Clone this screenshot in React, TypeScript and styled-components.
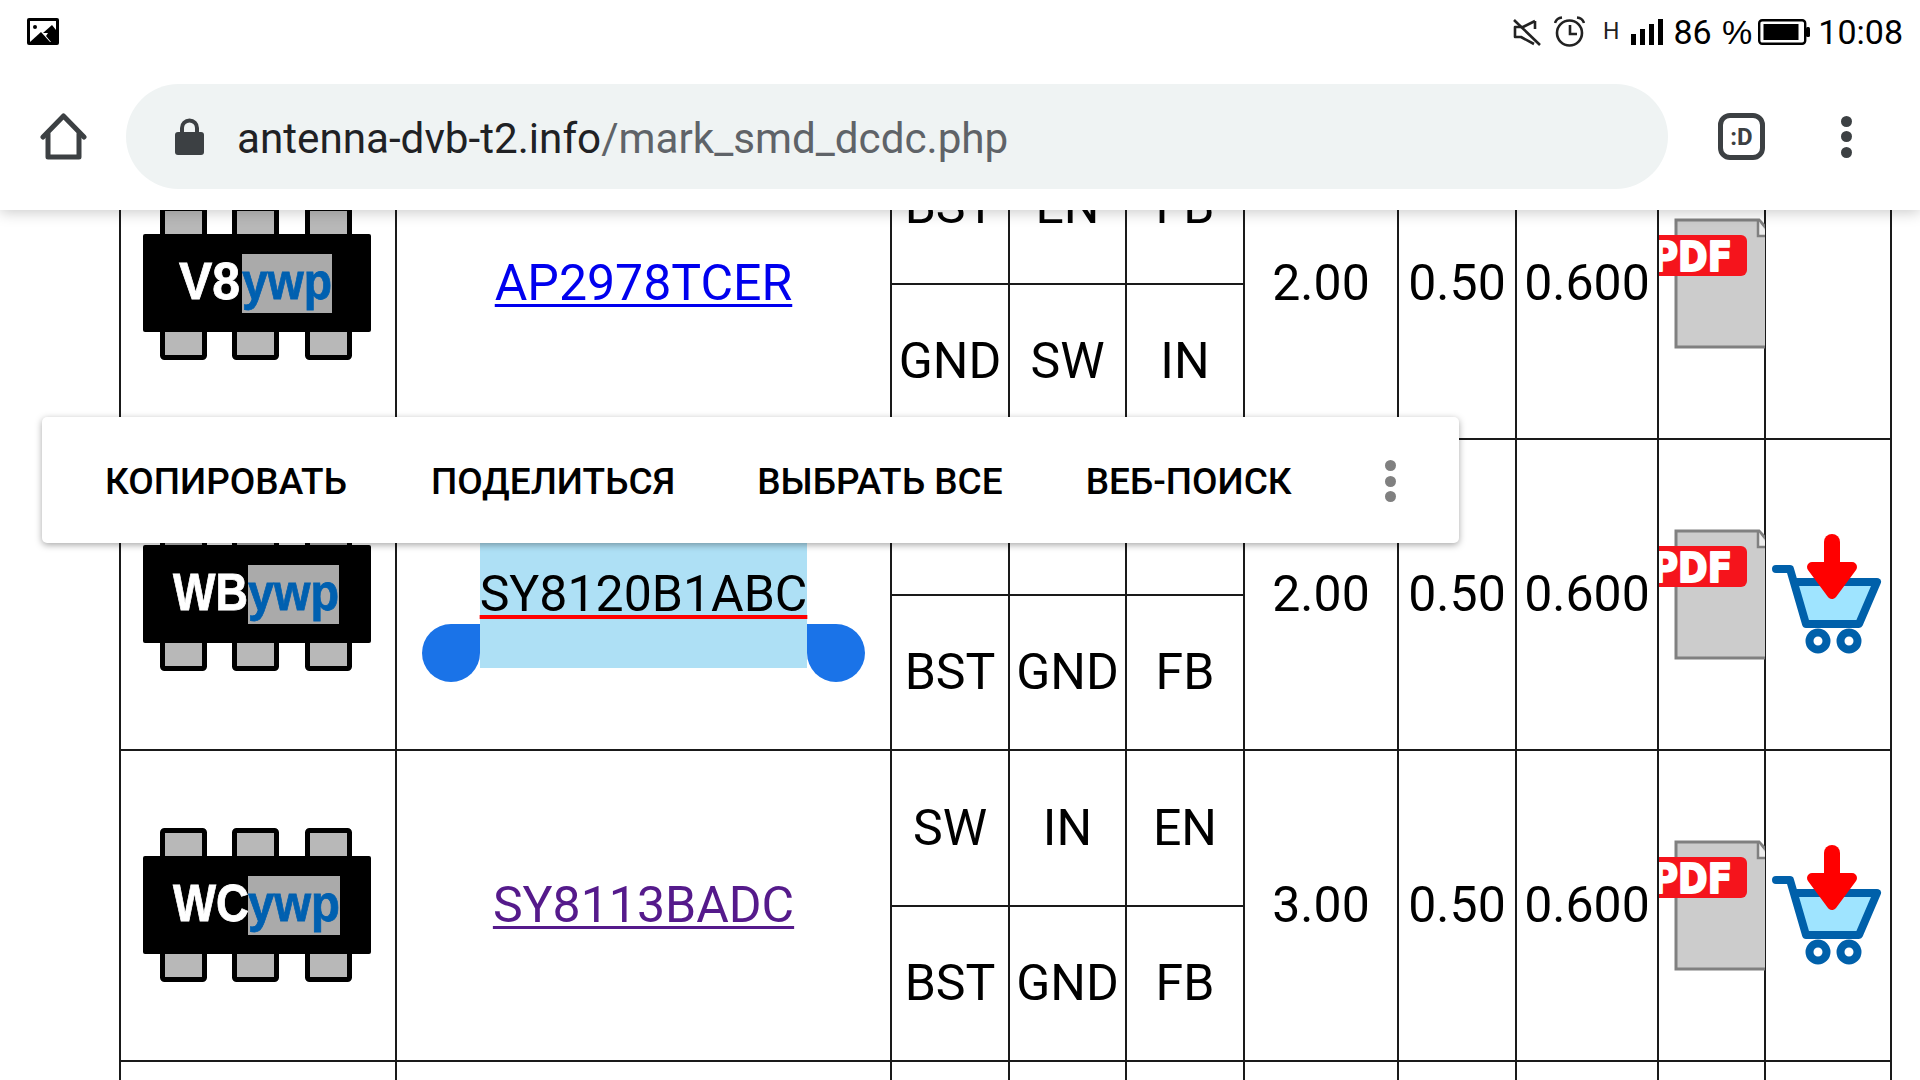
import React from 'react';
import styled, { createGlobalStyle } from 'styled-components';

const Global = createGlobalStyle`
  html, body { margin: 0; padding: 0; background: #fff; }
  body { font-family: Roboto, "Liberation Sans", sans-serif; color: #000; overflow: hidden; }
`;

const Page = styled.div`
  position: relative;
  width: 1920px;
  height: 1080px;
  overflow: hidden;
  background: #fff;
`;

const Header = styled.header`
  position: relative;
  z-index: 3;
  background: #fff;
  box-shadow: 0 2px 14px rgba(0, 0, 0, 0.22);
`;

const StatusBar = styled.div`
  display: flex;
  align-items: center;
  height: 63px;
  padding: 0 17px 0 27px;
`;

const StatusSpacer = styled.div`
  flex: 1;
`;

const StatusItem = styled.div<{ $gap: number }>`
  display: flex;
  align-items: center;
  margin-left: ${p => p.$gap}px;
`;

const StatusText = styled.span`
  font-size: 34px;
  line-height: 40px;
  word-spacing: 2px;
  color: #000;
  white-space: pre;
`;

const PercentSign = styled.span`
  font-family: "Liberation Sans", sans-serif;
`;

const NetLetter = styled.span`
  font-size: 23px;
  line-height: 24px;
  color: #222;
`;

const Toolbar = styled.div`
  display: flex;
  align-items: center;
  height: 147px;
  padding-left: 40px;
`;

const UrlPill = styled.div`
  display: flex;
  align-items: center;
  width: 1542px;
  height: 105px;
  margin-left: 39px;
  padding-left: 49px;
  box-sizing: border-box;
  border-radius: 53px;
  background: #eff3f3;
`;

const Url = styled.span`
  margin: 4px 0 0 33px;
  font-size: 42.2px;
  line-height: 48px;
  color: #202124;
  white-space: nowrap;
`;

const UrlPath = styled.span`
  color: #5f6368;
`;

const TabCounter = styled.div`
  display: flex;
  align-items: center;
  justify-content: center;
  width: 47px;
  height: 47px;
  margin-left: 50px;
  box-sizing: border-box;
  border: 5px solid #3c4043;
  border-radius: 12px;
  font-size: 24px;
  font-weight: 700;
  color: #3c4043;
`;

const MenuDots = styled.div<{ $gap: number; $color: string }>`
  display: flex;
  flex-direction: column;
  gap: 4.5px;
  margin-left: ${p => p.$gap}px;
  & > i {
    display: block;
    width: 11px;
    height: 11px;
    border-radius: 50%;
    background: ${p => p.$color};
  }
`;

const Table = styled.table`
  position: relative;
  margin: -83px 0 0 119px;
  border-collapse: collapse;
  table-layout: fixed;
  width: 1771px;
  font-size: 50px;
  text-align: center;
  & td {
    border: 2px solid #1a1a1a;
    padding: 0 0 1px;
    vertical-align: middle;
  }
`;

const UpperRow = styled.tr`
  height: 156px;
`;

const LowerRow = styled.tr`
  height: 155px;
`;

const ChipSvg = styled.svg`
  display: block;
  margin: 0 auto;
`;

const PartLink = styled.a<{ $visited?: boolean }>`
  color: ${p => (p.$visited ? '#551a8b' : '#0000ee')};
  text-decoration: underline;
  text-decoration-thickness: 3px;
  text-underline-offset: 4px;
`;

const SelectedLink = styled.a`
  position: relative;
  display: inline-block;
  isolation: isolate;
  color: #000;
  text-decoration: underline;
  text-decoration-color: #f00;
  text-decoration-thickness: 4px;
  text-underline-offset: 4px;
`;

const Selection = styled.span`
  position: absolute;
  z-index: -1;
  left: 0;
  right: 0;
  top: -130px;
  bottom: -45px;
  background: #aee0f5;
`;

const Handle = styled.span<{ $side: 'left' | 'right' }>`
  position: absolute;
  bottom: -59px;
  width: 58px;
  height: 58px;
  background: #1a73e8;
  ${p =>
    p.$side === 'left'
      ? 'left: -58px; border-radius: 50% 0 50% 50%;'
      : 'right: -58px; border-radius: 0 50% 50% 50%;'}
`;

const IconSvg = styled.svg`
  display: block;
  margin: 0 auto;
`;

const FloatingMenu = styled.div`
  position: absolute;
  z-index: 2;
  left: 42px;
  top: 417px;
  display: flex;
  align-items: center;
  width: 1417px;
  height: 126px;
  box-sizing: border-box;
  padding: 2px 0 0 63px;
  border-radius: 5px;
  background: #fff;
  box-shadow: 0 2px 7px rgba(0, 0, 0, 0.35);
`;

const MenuAction = styled.span<{ $gap?: number }>`
  margin-left: ${p => p.$gap ?? 0}px;
  font-size: 37px;
  font-weight: 500;
  color: #000;
  white-space: nowrap;
`;

const ImageIcon = () => (
  <svg width="32" height="27" viewBox="0 0 32 27">
    <rect width="32" height="27" rx="2" fill="#000" />
    <rect x="3" y="3" width="26" height="21" fill="#fff" />
    <path d="M3 24 L14 14 L23 24 Z" fill="#000" />
    <path d="M16 15 L25 7 L29 12 V24 H24 L19 18 L21 15 Z" fill="#000" />
    <circle cx="8" cy="9" r="2" fill="#000" />
  </svg>
);

const MuteIcon = () => (
  <svg width="28" height="28" viewBox="0 0 28 28" fill="none" stroke="#222" strokeWidth="2.6">
    <path d="M22 3 L10 9 H2 V19 H8 L21 26" strokeLinejoin="round" />
    <path d="M22 3 V11" />
    <path d="M1 2 L27 27" />
  </svg>
);

const AlarmIcon = () => (
  <svg width="31" height="31" viewBox="0 0 31 31" fill="none" stroke="#222" strokeWidth="2.6">
    <circle cx="15.5" cy="17" r="12.5" />
    <path d="M16 9 V18 H23" />
    <path d="M1 7 Q2.5 2 8 1.5" />
    <path d="M30 7 Q28.5 2 23 1.5" />
  </svg>
);

const SignalIcon = () => (
  <svg width="32" height="26" viewBox="0 0 32 26" fill="#000">
    <rect x="0" y="15" width="5" height="11" />
    <rect x="9" y="10" width="5" height="16" />
    <rect x="18" y="5" width="5" height="21" />
    <rect x="27" y="0" width="5" height="26" />
  </svg>
);

const BatteryIcon = () => (
  <svg width="52" height="26" viewBox="0 0 52 26">
    <rect x="1.2" y="1.2" width="46" height="23.6" rx="3" fill="#fff" stroke="#000" strokeWidth="2.4" />
    <rect x="5.5" y="5" width="35" height="16" fill="#000" />
    <rect x="48" y="8" width="4" height="10" rx="1.5" fill="#000" />
  </svg>
);

const HomeIcon = () => (
  <svg width="47" height="47" viewBox="0 0 47 47" fill="none" stroke="#3c4043" strokeWidth="5" strokeLinejoin="round" strokeLinecap="round">
    <path d="M3 24 L23.5 3 L44 24" />
    <path d="M8 21 V44 H39 V21" />
  </svg>
);

const LockIcon = () => (
  <svg width="29" height="37" viewBox="0 0 29 37">
    <path d="M7 17 V10 a7.5 7.5 0 0 1 15 0 V17" fill="none" stroke="#3c4043" strokeWidth="4" />
    <rect x="0" y="14" width="29" height="23" rx="3" fill="#3c4043" />
  </svg>
);

const Chip = ({ mark, markWidth, boxX, boxWidth, markX }: { mark: string; markWidth: number; markX: number; boxX: number; boxWidth: number }) => (
  <ChipSvg width="232" height="156" viewBox="0 0 232 156">
    {[18, 90, 163].map(x => (
      <React.Fragment key={x}>
        <rect x={x + 2.5} y={3.5} width={42} height={40} rx="2" fill="#b8b8b8" stroke="#000" strokeWidth="5" />
        <rect x={x + 2.5} y={112} width={42} height={40.5} rx="2" fill="#b8b8b8" stroke="#000" strokeWidth="5" />
      </React.Fragment>
    ))}
    <rect x="1" y="29" width="228" height="98" rx="2" fill="#000" />
    <rect x={boxX} y="49" width={boxWidth} height="59" fill="#aaaaaa" />
    <text x={markX} y="94" fontFamily="'Liberation Sans', sans-serif" fontWeight="700" fontSize="52" fill="#fff" stroke="#fff" strokeWidth="0.8" textLength={markWidth} lengthAdjust="spacingAndGlyphs">{mark}</text>
    <text x={boxX} y="94" fontFamily="'Liberation Sans', sans-serif" fontWeight="700" fontSize="52" fill="#0060b0" stroke="#0060b0" strokeWidth="0.8" textLength={boxWidth} lengthAdjust="spacingAndGlyphs">ywp</text>
  </ChipSvg>
);

const PdfIcon = () => (
  <IconSvg width="106" height="132" viewBox="0 0 106 132" style={{ overflow: 'hidden' }}>
    <path d="M17 3 H100 L110 14 V130 H17 Z" fill="#cccccc" stroke="#808080" strokeWidth="3" />
    <path d="M99 3 V19 H110" fill="#eee" stroke="#808080" strokeWidth="2.5" />
    <path d="M-10 18 H82 a6 6 0 0 1 6 6 V53 a6 6 0 0 1 -6 6 H-10 Z" fill="#f5141c" />
    <text x="-7" y="54" fontFamily="'DejaVu Sans', sans-serif" fontWeight="700" fontSize="40" fill="#fff" stroke="#fff" strokeWidth="2" strokeLinejoin="round" textLength="80" lengthAdjust="spacingAndGlyphs">PDF</text>
  </IconSvg>
);

const CartIcon = () => (
  <IconSvg width="124" height="132" viewBox="0 0 124 132">
    <path d="M30 54 H111 L93 96 H40 Z" fill="#9fe4ff" />
    <path d="M10 41 H24 L40 96 H93 L111 54 H30" fill="none" stroke="#0060aa" strokeWidth="8" strokeLinejoin="round" strokeLinecap="round" />
    <circle cx="52" cy="113" r="8.5" fill="#fff" stroke="#0060aa" strokeWidth="8" />
    <circle cx="83" cy="113" r="8.5" fill="#fff" stroke="#0060aa" strokeWidth="8" />
    <path d="M66 14 V44" stroke="#f00" strokeWidth="16" strokeLinecap="round" />
    <path d="M46 39 H86 L66 66 Z" fill="#f00" stroke="#f00" strokeWidth="10" strokeLinejoin="round" />
  </IconSvg>
);

type Row = {
  chip?: { mark: string; markX: number; markWidth: number; boxX: number; boxWidth: number };
  part?: React.ReactNode;
  top: string[];
  bottom: string[];
  vals: string[];
  pdf: boolean;
  cart: boolean;
};

const rows: Row[] = [
  {
    chip: { mark: 'V8', markX: 37, markWidth: 61, boxX: 100, boxWidth: 90 },
    part: <PartLink>AP2978TCER</PartLink>,
    top: ['BST', 'EN', 'FB'],
    bottom: ['GND', 'SW', 'IN'],
    vals: ['2.00', '0.50', '0.600'],
    pdf: true,
    cart: false,
  },
  {
    chip: { mark: 'WB', markX: 31, markWidth: 75, boxX: 106, boxWidth: 91 },
    part: (
      <SelectedLink>
        <Selection />
        SY8120B1ABC
        <Handle $side="left" />
        <Handle $side="right" />
      </SelectedLink>
    ),
    top: ['SW', 'IN', 'EN'],
    bottom: ['BST', 'GND', 'FB'],
    vals: ['2.00', '0.50', '0.600'],
    pdf: true,
    cart: true,
  },
  {
    chip: { mark: 'WC', markX: 31, markWidth: 76, boxX: 106, boxWidth: 92 },
    part: <PartLink $visited>SY8113BADC</PartLink>,
    top: ['SW', 'IN', 'EN'],
    bottom: ['BST', 'GND', 'FB'],
    vals: ['3.00', '0.50', '0.600'],
    pdf: true,
    cart: true,
  },
  { top: ['', '', ''], bottom: ['', '', ''], vals: ['', '', ''], pdf: false, cart: false },
];

const columns = [276, 495, 118, 117, 118, 154, 118, 142, 107, 126];

export default function App() {
  return (
    <Page>
      <Global />
      <Header>
        <StatusBar>
          <ImageIcon />
          <StatusSpacer />
          <StatusItem $gap={0}><MuteIcon /></StatusItem>
          <StatusItem $gap={13}><AlarmIcon /></StatusItem>
          <StatusItem $gap={18}><NetLetter>H</NetLetter></StatusItem>
          <StatusItem $gap={12}><SignalIcon /></StatusItem>
          <StatusItem $gap={10}><StatusText>86 <PercentSign>%</PercentSign></StatusText></StatusItem>
          <StatusItem $gap={6}><BatteryIcon /></StatusItem>
          <StatusItem $gap={8}><StatusText>10:08</StatusText></StatusItem>
        </StatusBar>
        <Toolbar>
          <HomeIcon />
          <UrlPill>
            <LockIcon />
            <Url>antenna-dvb-t2.info<UrlPath>/mark_smd_dcdc.php</UrlPath></Url>
          </UrlPill>
          <TabCounter>:D</TabCounter>
          <MenuDots $gap={76} $color="#3c4043"><i /><i /><i /></MenuDots>
        </Toolbar>
      </Header>
      <Table>
        <colgroup>
          {columns.map((w, i) => <col key={i} width={w} />)}
        </colgroup>
        <tbody>
          {rows.map((r, i) => (
            <React.Fragment key={i}>
              <UpperRow>
                <td rowSpan={2}>{r.chip && <Chip {...r.chip} />}</td>
                <td rowSpan={2}>{r.part}</td>
                {r.top.map((t, j) => <td key={j}>{t}</td>)}
                {r.vals.map((v, j) => <td key={j} rowSpan={2}>{v}</td>)}
                <td rowSpan={2}>{r.pdf && <PdfIcon />}</td>
                <td rowSpan={2}>{r.cart && <CartIcon />}</td>
              </UpperRow>
              <LowerRow>
                {r.bottom.map((t, j) => <td key={j}>{t}</td>)}
              </LowerRow>
            </React.Fragment>
          ))}
        </tbody>
      </Table>
      <FloatingMenu>
        <MenuAction>КОПИРОВАТЬ</MenuAction>
        <MenuAction $gap={84}>ПОДЕЛИТЬСЯ</MenuAction>
        <MenuAction $gap={82}>ВЫБРАТЬ ВСЕ</MenuAction>
        <MenuAction $gap={83}>ВЕБ-ПОИСК</MenuAction>
        <MenuDots $gap={93} $color="#808080"><i /><i /><i /></MenuDots>
      </FloatingMenu>
    </Page>
  );
}
